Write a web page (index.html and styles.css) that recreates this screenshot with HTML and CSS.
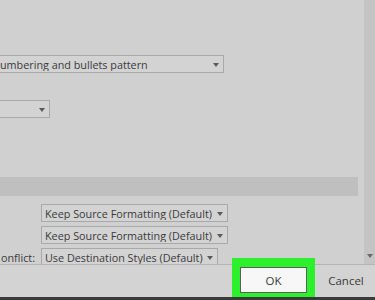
FILE: index.html
```html
<!DOCTYPE html>
<html lang="en">
<head>
<meta charset="UTF-8" />
<meta name="viewport" content="width=device-width, initial-scale=1" />
<title>Paste Options</title>
<link rel="stylesheet" href="styles.css">
</head>
<body>

<div class="window">
  <div class="pane">
    <div class="content">
      <div class="select select-wide"><span class="select-text">umbering and bullets pattern</span><i class="caret"></i></div>
      <div class="select select-short"><i class="caret"></i></div>
      <div class="band"></div>
      <div class="rows">
        <div class="row">
          <span class="label"></span>
          <div class="select select-row"><span class="select-text">Keep Source Formatting (Default)</span><i class="caret"></i></div>
        </div>
        <div class="row">
          <span class="label"></span>
          <div class="select select-row"><span class="select-text">Keep Source Formatting (Default)</span><i class="caret"></i></div>
        </div>
        <div class="row">
          <span class="label">onflict:</span>
          <div class="select select-row select-narrow"><span class="select-text">Use Destination Styles (Default)</span><i class="caret"></i></div>
        </div>
      </div>
    </div>
    <div class="scrollbar"><i class="scroll-down"></i></div>
  </div>
  <div class="footer">
    <button class="btn btn-ok">OK</button>
    <button class="btn btn-cancel">Cancel</button>
  </div>
  <div class="footer-edge"></div>
</div>

</body>
</html>
```

FILE: styles.css
```css
html, body {
  margin: 0; padding: 0;
  width: 100%; height: 100%;
  overflow: hidden;
  background: #d0d0d0;
  font-family: 'Open Sans', 'Noto Sans', sans-serif;
  font-size: 10.8px;
  color: #3a3a3a;
}
.window {
  display: flex;
  flex-direction: column;
  width: 375px;
  height: 300px;
}
.pane {
  display: flex;
  height: 264px;
  overflow: hidden;
}
.content {
  flex: 1;
  display: flex;
  flex-direction: column;
  align-items: flex-start;
  padding-top: 55px;
  min-width: 0;
}
.content > * {
  flex-shrink: 0;
}
.select {
  box-sizing: border-box;
  height: 18px;
  display: flex;
  align-items: center;
  border: 1px solid #a9a9a9;
  background: #d3d3d3;
  white-space: nowrap;
  flex-shrink: 0;
}
.select-text {
  flex: 1;
  min-width: 0;
  overflow: hidden;
  padding-left: 3px;
  line-height: 13px;
}
.caret {
  flex-shrink: 0;
  width: 0; height: 0;
  border-left: 3.5px solid transparent;
  border-right: 3.5px solid transparent;
  border-top: 4px solid #5a5a5a;
  margin: 1px 4px 0 4px;
}
.select-wide {
  width: 226px;
  margin-left: -2px;
}
.select-wide .select-text { padding-left: 1px; }
.select-short {
  width: 60px;
  margin-left: -10px;
  margin-top: 27px;
  justify-content: flex-end;
}
.band {
  align-self: stretch;
  height: 19px;
  margin: 59px 6px 0 0;
  background: #bfbfbf;
}
.rows {
  display: flex;
  flex-direction: column;
  gap: 4px;
  margin-top: 8px;
}
.row {
  display: flex;
  align-items: center;
}
.label {
  box-sizing: border-box;
  flex: 0 0 35px;
  min-width: 0;
  white-space: nowrap;
  padding-left: 1px;
  margin-right: 6px;
  line-height: 13px;
}
.select-row {
  width: 187px;
}
.select-narrow {
  width: 177px;
}
.scrollbar {
  width: 11px;
  background: #c4c4c4;
  display: flex;
  flex-direction: column;
  justify-content: flex-end;
  align-items: center;
}
.scroll-down {
  width: 0; height: 0;
  border-left: 3px solid transparent;
  border-right: 3px solid transparent;
  border-top: 4px solid #6a6a6a;
  margin-bottom: 6px;
}
.footer {
  box-sizing: border-box;
  height: 33px;
  border-top: 1px solid #b4b4b4;
  background: #d3d3d3;
  display: flex;
  justify-content: flex-end;
  align-items: flex-start;
  gap: 10px;
  padding-top: 2px;
}
.btn {
  font-family: inherit;
  font-size: 11.5px;
  color: #3a3a3a;
  height: 26px;
  padding: 0;
  background: transparent;
  border: 1px solid transparent;
}
.btn-ok {
  width: 67px;
  background: #f7f7f7;
  border-color: #5e5e5e;
  box-shadow: 0 -1px 0 8px #2df02d;
}
.btn-cancel {
  width: 58px;
}
.footer-edge {
  height: 3px;
  background: #3a3a3a;
}
```
